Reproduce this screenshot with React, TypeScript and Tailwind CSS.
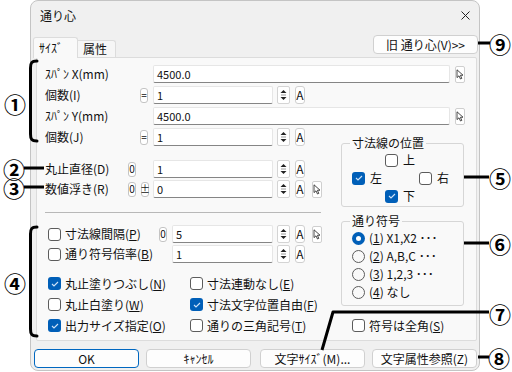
import type { ReactNode } from "react";

// mnemonic letter "(X)" with underline
const Mn = ({ k }: { k: string }) => (
  <>
    (<span className="underline underline-offset-[1px]">{k}</span>)
  </>
);

const Check = ({ on }: { on?: boolean }) =>
  on ? (
    <span className="w-[13px] h-[13px] shrink-0 rounded-[3px] bg-[#005fb8] flex items-center justify-center">
      <svg width="8" height="6" viewBox="0 0 8 6">
        <path d="M1 3 L3 5 L7 1" fill="none" stroke="#cfe3f7" strokeWidth="1.1" />
      </svg>
    </span>
  ) : (
    <span className="w-[13px] h-[13px] shrink-0 rounded-[3px] border border-[#5c5c5c] bg-white" />
  );

const Radio = ({ on }: { on?: boolean }) =>
  on ? (
    <span className="w-[13px] h-[13px] shrink-0 rounded-full bg-[#005fb8] flex items-center justify-center">
      <span className="w-[5px] h-[5px] rounded-full bg-white" />
    </span>
  ) : (
    <span className="w-[13px] h-[13px] shrink-0 rounded-full border border-[#5c5c5c] bg-[#f9f9f9]" />
  );

const CheckLabel = ({ on, children }: { on?: boolean; children: ReactNode }) => (
  <div className="h-[17px] flex items-center gap-[4px] whitespace-nowrap">
    <Check on={on} />
    <span>{children}</span>
  </div>
);

const Mini = ({ children, className = "" }: { children: ReactNode; className?: string }) => (
  <span className={`h-[15px] w-[8px] shrink-0 bg-white border border-[#c4c4c4] rounded-[3px] flex items-center justify-center text-[10px] leading-none ${className}`}>
    {children}
  </span>
);

const Field = ({ v, w }: { v: string; w: string }) => (
  <div className={`${w} h-[18px] shrink-0 bg-white border border-[#e6e6e6] border-b-[#858585] rounded-[2px] pl-[3px] flex items-center text-[11px]`}>
    {v}
  </div>
);

const Spin = () => (
  <span className="ml-[4px] w-[13px] h-[18px] shrink-0 bg-white border border-[#d4d4d4] rounded-[2px] flex items-center justify-center">
    <svg width="7" height="12" viewBox="0 0 7 12">
      <path d="M3.5 1 L6.5 4 L0.5 4 Z" fill="#222" />
      <path d="M1 6 L6 6" stroke="#9a9a9a" strokeWidth="1" />
      <path d="M0.5 8 L6.5 8 L3.5 11 Z" fill="#222" />
    </svg>
  </span>
);

const ABtn = () => (
  <span className="ml-[5px] w-[10px] h-[18px] shrink-0 bg-white border border-[#cfcfcf] rounded-[3px] flex items-center justify-center text-[12px] leading-none">
    A
  </span>
);

const Pick = ({ className = "ml-[7px]" }: { className?: string }) => (
  <span className={`w-[10px] h-[17px] shrink-0 bg-white border border-[#cfcfcf] rounded-[2px] flex items-center justify-center ${className}`}>
    <svg width="8" height="11" viewBox="0 0 8 11">
      <path d="M1 0.8 L1 8.6 L3 6.8 L4.5 10 L5.8 9.4 L4.4 6.3 L7 6.2 Z" fill="white" stroke="#333" strokeWidth="0.9" strokeLinejoin="round" />
    </svg>
  </span>
);

const Row = ({ label, pre, children }: { label: ReactNode; pre?: ReactNode; children: ReactNode }) => (
  <div className="h-[18px] flex items-center">
    <span className="w-[83px] shrink-0 whitespace-nowrap">{label}</span>
    <div className="w-[25px] h-full shrink-0 flex items-center">{pre}</div>
    {children}
  </div>
);

const Btn = ({ children, primary, className = "" }: { children: ReactNode; primary?: boolean; className?: string }) => (
  <div
    className={`w-[105px] h-[19px] shrink-0 rounded-[4px] bg-[#fdfdfd] border flex items-center justify-center whitespace-nowrap ${
      primary ? "border-[#0067c0]" : "border-[#d0d0d0]"
    } ${className}`}
  >
    {children}
  </div>
);

const Num = ({ c, className }: { c: string; className: string }) => (
  <span className={`absolute w-[22px] h-[18px] flex items-center justify-center text-[22px] font-bold leading-none text-black ${className}`}>
    {c}
  </span>
);

export default function App() {
  return (
    <div className="relative w-[512px] h-[372px] bg-white overflow-hidden text-[12px] text-[#111] font-['Noto_Sans_CJK_JP','Noto_Sans',sans-serif]">
      <div className="ml-[30px] w-[450px] h-[371px] bg-[#f0f0f0] border border-[#c4c4c4] rounded-[8px] flex flex-col">
        {/* Title bar */}
        <div className="h-[29px] flex items-center justify-between pl-[9px] pr-[9px]">
          <span>通り心</span>
          <svg width="9" height="9" viewBox="0 0 9 9">
            <path d="M0.5 0.5 L8.5 8.5 M8.5 0.5 L0.5 8.5" stroke="#222" strokeWidth="1" />
          </svg>
        </div>

        {/* Tabs */}
        <div className="h-[27px] flex items-end pl-[2px] pr-[1px]">
          <div className="relative z-10 -mb-px h-[21px] w-[45px] bg-[#f9f9f9] border border-b-0 border-[#dcdcdc] rounded-t-[3px] pl-[5px] leading-[19px]">
            ｻｲｽﾞ
          </div>
          <div className="h-[17px] w-[38px] bg-[#f6f6f6] border border-b-0 border-l-0 border-[#dcdcdc] rounded-tr-[3px] pl-[5px] leading-[16px]">
            属性
          </div>
          <Btn className="ml-auto self-start mt-[5px] h-[17px]">旧 通り心(V)&gt;&gt;</Btn>
        </div>

        {/* Tab page */}
        <div className="ml-[5px] w-[441px] h-[284px] bg-[#f9f9f9] border border-[#dcdcdc] rounded-[2px] pl-[8px] pt-[7px] flex flex-col">
          <div className="flex flex-col gap-[3px]">
            <Row label="ｽﾊﾟﾝ X(mm)">
              <Field v="4500.0" w="w-[297px]" />
              <Pick className="ml-[5px]" />
            </Row>
            <Row label="個数(I)" pre={<Mini className="ml-[12px]">=</Mini>}>
              <Field v="1" w="w-[120px]" />
              <Spin />
              <ABtn />
            </Row>
            <Row label="ｽﾊﾟﾝ Y(mm)">
              <Field v="4500.0" w="w-[297px]" />
              <Pick className="ml-[5px]" />
            </Row>
          </div>

          <div className="flex mt-[3px]">
            {/* left column */}
            <div className="w-[296px] shrink-0 flex flex-col">
              <Row label="個数(J)" pre={<Mini className="ml-[12px]">=</Mini>}>
                <Field v="1" w="w-[120px]" />
                <Spin />
                <ABtn />
              </Row>
              <div className="mt-[14px]">
                <Row label="丸止直径(D)" pre={<Mini>0</Mini>}>
                  <Field v="1" w="w-[120px]" />
                  <Spin />
                  <ABtn />
                </Row>
              </div>
              <div className="mt-[2px]">
                <Row
                  label="数値浮き(R)"
                  pre={
                    <>
                      <Mini>0</Mini>
                      <Mini className="ml-[5px]">±</Mini>
                    </>
                  }
                >
                  <Field v="0" w="w-[120px]" />
                  <Spin />
                  <ABtn />
                  <Pick />
                </Row>
              </div>

              <div className="mt-[14px] h-px w-[276px] bg-[#b8b8b8]" />

              <div className="mt-[12px] h-[18px] flex items-center">
                <div className="ml-[3px] w-[111px] shrink-0">
                  <CheckLabel>
                    寸法線間隔<Mn k="P" />
                  </CheckLabel>
                </div>
                <Mini>0</Mini>
                <div className="ml-[5px] flex items-center">
                  <Field v="5" w="w-[101px]" />
                  <Spin />
                  <ABtn />
                  <Pick />
                </div>
              </div>
              <div className="mt-[2px] h-[18px] flex items-center">
                <div className="ml-[3px] w-[124px] shrink-0">
                  <CheckLabel>
                    通り符号倍率<Mn k="B" />
                  </CheckLabel>
                </div>
                <Field v="1" w="w-[101px]" />
                <Spin />
                <ABtn />
              </div>

              <div className="mt-[12px] ml-[3px] grid grid-cols-[142px_1fr] gap-y-[4px]">
                <CheckLabel on>
                  丸止塗りつぶし<Mn k="N" />
                </CheckLabel>
                <CheckLabel>
                  寸法連動なし<Mn k="E" />
                </CheckLabel>
                <CheckLabel>
                  丸止白塗り<Mn k="W" />
                </CheckLabel>
                <CheckLabel on>
                  寸法文字位置自由<Mn k="F" />
                </CheckLabel>
                <CheckLabel on>
                  出力サイズ指定<Mn k="O" />
                </CheckLabel>
                <CheckLabel>
                  通りの三角記号<Mn k="T" />
                </CheckLabel>
              </div>
            </div>

            {/* right column */}
            <div className="w-[123px] shrink-0 pt-[8px] flex flex-col">
              <fieldset className="border border-[#d6d6d6] rounded-[3px] pl-[8px] pb-[3px]">
                <legend className="px-[2px] leading-[14px]">寸法線の位置</legend>
                <div className="ml-[2px] mt-[3px] flex flex-col gap-[4px]">
                  <div className="h-[14px] pl-[33px] flex items-center gap-[5px]">
                    <Check />
                    <span>上</span>
                  </div>
                  <div className="h-[14px] flex items-center">
                    <div className="w-[67px] flex items-center gap-[5px]">
                      <Check on />
                      <span>左</span>
                    </div>
                    <div className="flex items-center gap-[5px]">
                      <Check />
                      <span>右</span>
                    </div>
                  </div>
                  <div className="h-[14px] pl-[33px] flex items-center gap-[5px]">
                    <Check on />
                    <span>下</span>
                  </div>
                </div>
              </fieldset>

              <fieldset className="mt-[7px] border border-[#d6d6d6] rounded-[3px] pl-[8px] pb-[6px]">
                <legend className="px-[2px] leading-[14px]">通り符号</legend>
                <div className="ml-[2px] mt-[3px] flex flex-col gap-[4px] whitespace-nowrap">
                  <div className="h-[14px] flex items-center gap-[4px]">
                    <Radio on />
                    <span>
                      (<span className="underline">1</span>) X1,X2 ･･･
                    </span>
                  </div>
                  <div className="h-[14px] flex items-center gap-[4px]">
                    <Radio />
                    <span>
                      (<span className="underline">2</span>) A,B,C ･･･
                    </span>
                  </div>
                  <div className="h-[14px] flex items-center gap-[4px]">
                    <Radio />
                    <span>
                      (<span className="underline">3</span>) 1,2,3 ･･･
                    </span>
                  </div>
                  <div className="h-[14px] flex items-center gap-[4px]">
                    <Radio />
                    <span>
                      (<span className="underline">4</span>) なし
                    </span>
                  </div>
                </div>
              </fieldset>

              <div className="mt-[11px] ml-[11px]">
                <CheckLabel>
                  符号は全角<Mn k="S" />
                </CheckLabel>
              </div>
            </div>
          </div>
        </div>

        {/* Bottom buttons */}
        <div className="mt-[8px] flex">
          <Btn primary className="ml-[3px]">OK</Btn>
          <Btn className="ml-[7px]">ｷｬﾝｾﾙ</Btn>
          <Btn className="ml-[9px]">文字ｻｲｽﾞ(M)...</Btn>
          <Btn className="ml-[7px]">文字属性参照(Z)</Btn>
        </div>
      </div>

      {/* Annotation lines and brackets */}
      <svg className="absolute inset-0 pointer-events-none" width="512" height="372" viewBox="0 0 512 372">
        <g stroke="black" strokeWidth="3" fill="none" strokeLinecap="round">
          <path d="M37 61 C31.5 61 30.5 63 30.5 68 L30.5 134 C30.5 139 31.5 141 37 141" />
          <path d="M37 227 C31.5 227 30.5 229 30.5 234 L30.5 329 C30.5 334 31.5 336 37 336" />
          <path d="M24 168 L44 168" strokeLinecap="butt" />
          <path d="M24 187 L44 187" strokeLinecap="butt" />
          <path d="M478 43 L490 43" strokeLinecap="butt" />
          <path d="M464 177 L489 177" strokeLinecap="butt" />
          <path d="M464 243 L489 243" strokeLinecap="butt" />
          <path d="M489 312 L333 312 L322 350" strokeLinecap="butt" strokeLinejoin="round" />
          <path d="M478 357 L489 357" strokeLinecap="butt" />
        </g>
      </svg>
      <Num c="①" className="left-[4px] top-[94px]" />
      <Num c="②" className="left-[3px] top-[159px]" />
      <Num c="③" className="left-[3px] top-[178px]" />
      <Num c="④" className="left-[4px] top-[273px]" />
      <Num c="⑤" className="left-[489px] top-[168px]" />
      <Num c="⑥" className="left-[489px] top-[234px]" />
      <Num c="⑦" className="left-[489px] top-[304px]" />
      <Num c="⑧" className="left-[488px] top-[348px]" />
      <Num c="⑨" className="left-[489px] top-[34px]" />
    </div>
  );
}
